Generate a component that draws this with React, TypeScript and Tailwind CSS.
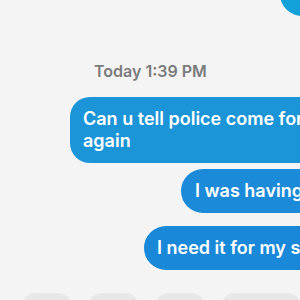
import React from "react";

export default function App() {
  return (
    <div
      className="w-[300px] h-[300px] overflow-hidden bg-[#f4f4f4] flex flex-col"
      style={{ fontFamily: "Inter, 'Noto Sans', sans-serif" }}
    >
      <div className="ml-[280px] -mt-[28px] h-[44px] w-[80px] shrink-0 rounded-[22px] bg-[#14a0d8] text-white text-[18px] font-semibold leading-[44px] pl-[12px] whitespace-nowrap">
        I
      </div>
      <div className="mt-[45px] ml-[94px] text-[16px] leading-[20px] font-semibold text-[#7b7b7b] whitespace-nowrap">
        Today 1:39 PM
      </div>
      <div className="mt-[16px] ml-[70px] w-[300px] shrink-0 rounded-[20px] bg-[#1b95d7] text-white text-[18px] font-semibold leading-[22px] py-[11px] px-[13px] whitespace-nowrap">
        Can u tell police come for me
        <br />
        again
      </div>
      <div className="mt-[6px] ml-[181px] w-[200px] shrink-0 h-[44px] rounded-[22px] bg-[#1b8ad9] text-white text-[18px] font-semibold leading-[44px] px-[14px] whitespace-nowrap">
        I was having
      </div>
      <div className="mt-[13px] ml-[144px] w-[220px] shrink-0 h-[44px] rounded-[22px] bg-[#1a88d9] text-white text-[18px] font-semibold leading-[44px] px-[13px] whitespace-nowrap">
        I need it for my school
      </div>
      <div className="mt-[23px] flex gap-[18px] ml-[23px] shrink-0">
        <div className="w-[50px] h-[30px] rounded-[12px] bg-[#e8e8e8]" />
        <div className="w-[50px] h-[30px] rounded-[12px] bg-[#e8e8e8]" />
        <div className="w-[50px] h-[30px] rounded-[12px] bg-[#e8e8e8]" />
        <div className="w-[80px] h-[30px] rounded-[12px] bg-[#e8e8e8]" />
      </div>
    </div>
  );
}
